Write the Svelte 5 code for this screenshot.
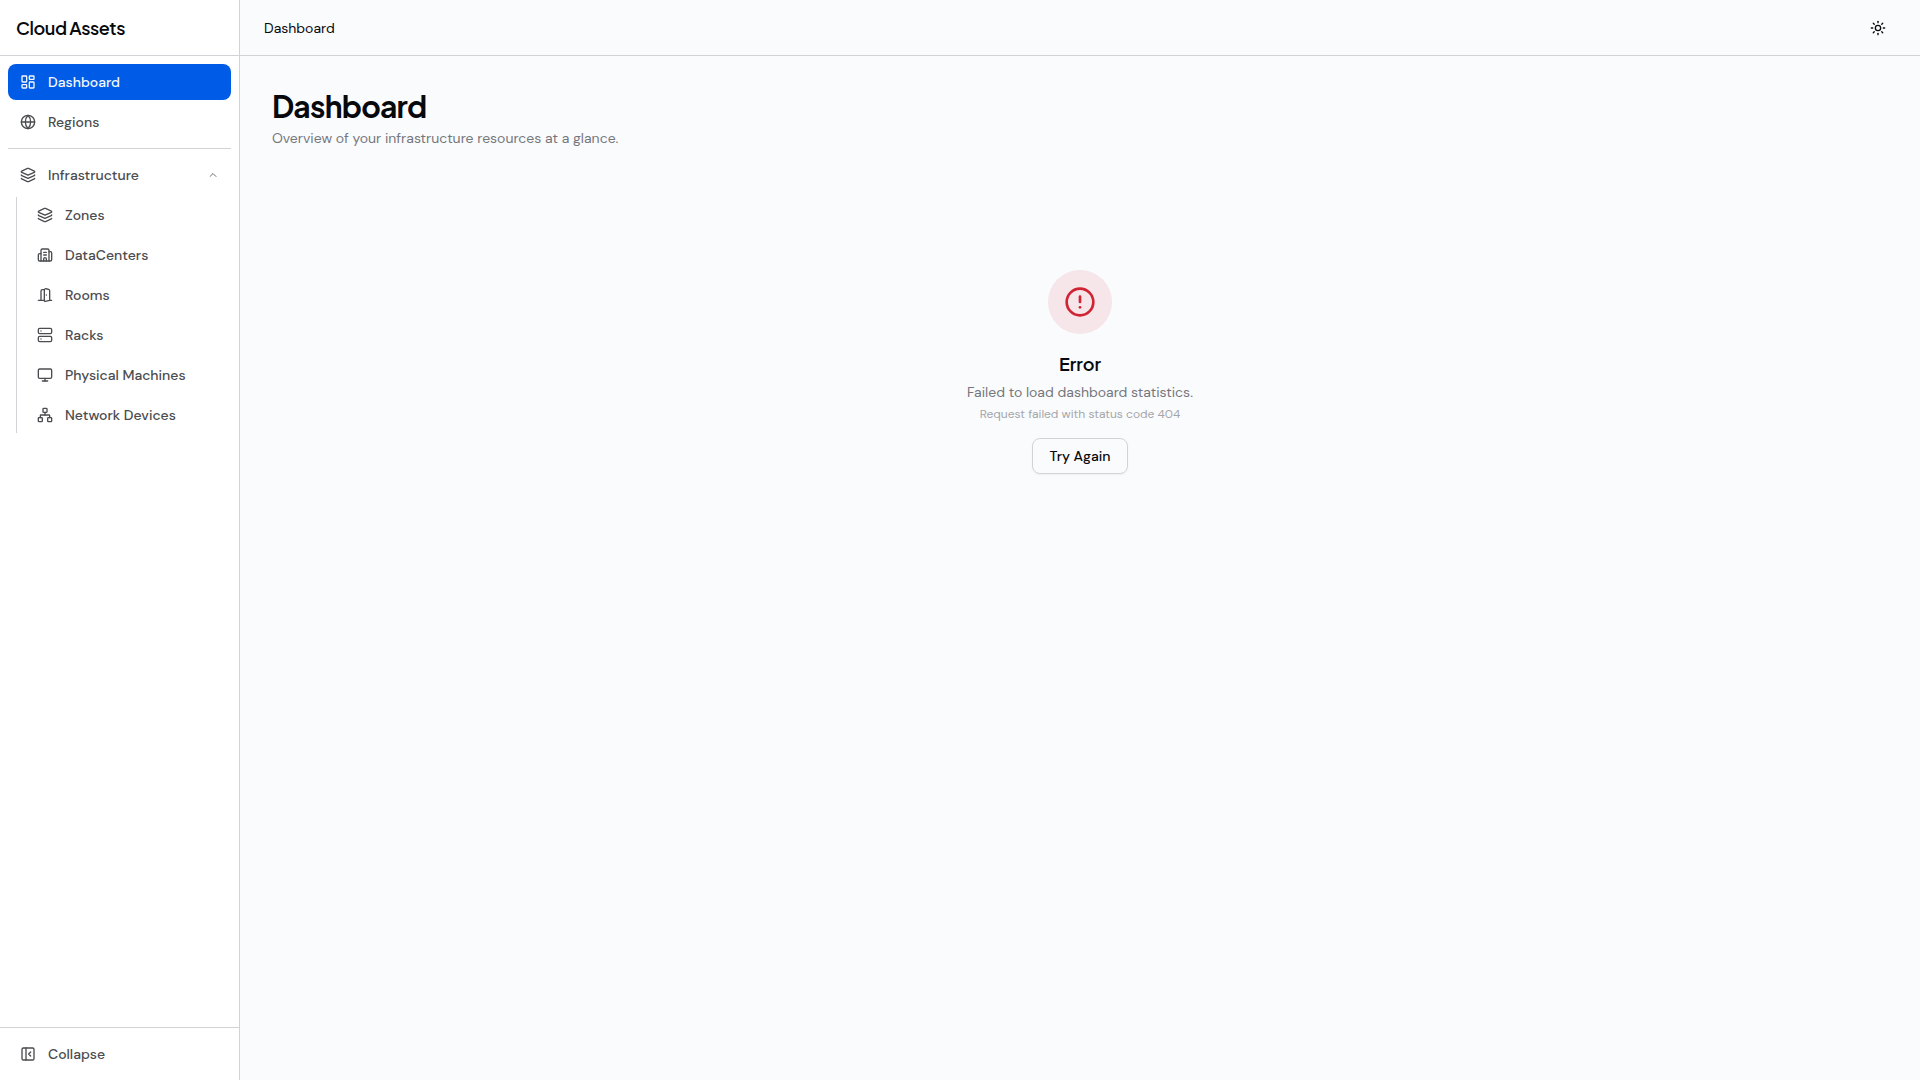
<script>
  let open = $state(true);
  let collapsed = $state(false);

  const topLinks = [
    { label: "Dashboard", icon: "dashboard", active: true },
    { label: "Regions", icon: "globe" }
  ];

  const infraLinks = [
    { label: "Zones", icon: "layers" },
    { label: "DataCenters", icon: "building" },
    { label: "Rooms", icon: "door" },
    { label: "Racks", icon: "server" },
    { label: "Physical Machines", icon: "monitor" },
    { label: "Network Devices", icon: "network" }
  ];

  // stroke paths on a 24x24 grid
  const icons = {
    dashboard: [
      "M4 3h5a1 1 0 0 1 1 1v7a1 1 0 0 1-1 1H4a1 1 0 0 1-1-1V4a1 1 0 0 1 1-1z",
      "M15 3h5a1 1 0 0 1 1 1v3a1 1 0 0 1-1 1h-5a1 1 0 0 1-1-1V4a1 1 0 0 1 1-1z",
      "M15 12h5a1 1 0 0 1 1 1v7a1 1 0 0 1-1 1h-5a1 1 0 0 1-1-1v-7a1 1 0 0 1 1-1z",
      "M4 16h5a1 1 0 0 1 1 1v3a1 1 0 0 1-1 1H4a1 1 0 0 1-1-1v-3a1 1 0 0 1 1-1z"
    ],
    globe: [
      "M2 12a10 10 0 1 0 20 0a10 10 0 1 0-20 0",
      "M12 2a14.5 14.5 0 0 0 0 20 14.5 14.5 0 0 0 0-20",
      "M2 12h20"
    ],
    layers: [
      "M12.83 2.18a2 2 0 0 0-1.66 0L2.6 6.08a1 1 0 0 0 0 1.83l8.58 3.91a2 2 0 0 0 1.66 0l8.58-3.9a1 1 0 0 0 0-1.83z",
      "M2 12a1 1 0 0 0 .58.91l8.6 3.91a2 2 0 0 0 1.65 0l8.58-3.9A1 1 0 0 0 22 12",
      "M2 17a1 1 0 0 0 .58.91l8.6 3.91a2 2 0 0 0 1.65 0l8.58-3.9A1 1 0 0 0 22 17"
    ],
    building: [
      "M10 12h4",
      "M10 8h4",
      "M14 21v-3a2 2 0 0 0-4 0v3",
      "M6 10H4a2 2 0 0 0-2 2v7a2 2 0 0 0 2 2h16a2 2 0 0 0 2-2V9a2 2 0 0 0-2-2h-2",
      "M6 21V5a2 2 0 0 1 2-2h8a2 2 0 0 1 2 2v16"
    ],
    door: [
      "M11 20H2",
      "M11 4.562v16.157a1 1 0 0 0 1.242.97L19 20V5.562a2 2 0 0 0-1.515-1.94l-4-1A2 2 0 0 0 11 4.561z",
      "M11 4H8a2 2 0 0 0-2 2v14",
      "M14 12h.01",
      "M22 20h-3"
    ],
    server: [
      "M4 2h16a2 2 0 0 1 2 2v4a2 2 0 0 1-2 2H4a2 2 0 0 1-2-2V4a2 2 0 0 1 2-2z",
      "M4 14h16a2 2 0 0 1 2 2v4a2 2 0 0 1-2 2H4a2 2 0 0 1-2-2v-4a2 2 0 0 1 2-2z",
      "M6 6h.01",
      "M6 18h.01"
    ],
    monitor: [
      "M4 3h16a2 2 0 0 1 2 2v10a2 2 0 0 1-2 2H4a2 2 0 0 1-2-2V5a2 2 0 0 1 2-2z",
      "M8 21h8",
      "M12 17v4"
    ],
    network: [
      "M17 16h4a1 1 0 0 1 1 1v4a1 1 0 0 1-1 1h-4a1 1 0 0 1-1-1v-4a1 1 0 0 1 1-1z",
      "M3 16h4a1 1 0 0 1 1 1v4a1 1 0 0 1-1 1H3a1 1 0 0 1-1-1v-4a1 1 0 0 1 1-1z",
      "M10 2h4a1 1 0 0 1 1 1v4a1 1 0 0 1-1 1h-4a1 1 0 0 1-1-1V3a1 1 0 0 1 1-1z",
      "M5 16v-3a1 1 0 0 1 1-1h12a1 1 0 0 1 1 1v3",
      "M12 12V8"
    ],
    panel: [
      "M5 3h14a2 2 0 0 1 2 2v14a2 2 0 0 1-2 2H5a2 2 0 0 1-2-2V5a2 2 0 0 1 2-2z",
      "M9 3v18",
      "m16 15-3-3 3-3"
    ],
    sun: [
      "M8 12a4 4 0 1 0 8 0a4 4 0 1 0-8 0",
      "M12 2v2",
      "M12 20v2",
      "m4.93 4.93 1.41 1.41",
      "m17.66 17.66 1.41 1.41",
      "M2 12h2",
      "M20 12h2",
      "m6.34 17.66-1.41 1.41",
      "m19.07 4.93-1.41 1.41"
    ],
    alert: ["M2 12a10 10 0 1 0 20 0a10 10 0 1 0-20 0", "M12 8v4", "M12 16h.01"],
    chevron: ["m18 15-6-6-6 6"]
  };
</script>

{#snippet icon(name, size = 16)}
  <svg
    class="icon"
    width={size}
    height={size}
    viewBox="0 0 24 24"
    aria-hidden="true">
    {#each icons[name] as d}
      <path {d} />
    {/each}
  </svg>
{/snippet}

<div class="layout">
  <aside class="sidebar" class:collapsed>
    <div class="brand">{collapsed ? "" : "Cloud Assets"}</div>

    <nav aria-label="Main">
      {#each topLinks as link}
        <a
          class="item"
          class:active={link.active}
          href="#{link.icon}"
          aria-current={link.active ? "page" : undefined}>
          {@render icon(link.icon)}
          <span class="label">{link.label}</span>
        </a>
      {/each}

      <hr />

      <button class="item" aria-expanded={open} onclick={() => (open = !open)}>
        {@render icon("layers")}
        <span class="label">Infrastructure</span>
        <span class="chevron" class:closed={!open}>{@render icon("chevron", 12)}</span>
      </button>

      {#if open}
        <div class="group">
          {#each infraLinks as link}
            <a class="item" href="#{link.icon}">
              {@render icon(link.icon)}
              <span class="label">{link.label}</span>
            </a>
          {/each}
        </div>
      {/if}
    </nav>

    <div class="bottom">
      <button class="item" onclick={() => (collapsed = !collapsed)}>
        {@render icon("panel")}
        <span class="label">Collapse</span>
      </button>
    </div>
  </aside>

  <div class="page">
    <header>
      <span class="crumb">Dashboard</span>
      <button class="theme" aria-label="Toggle theme">
        {@render icon("sun")}
      </button>
    </header>

    <main>
      <h1>Dashboard</h1>
      <p class="subtitle">Overview of your infrastructure resources at a glance.</p>

      <section class="error" role="alert">
        <div class="badge">{@render icon("alert", 32)}</div>
        <h2>Error</h2>
        <p class="message">Failed to load dashboard statistics.</p>
        <p class="detail">Request failed with status code 404</p>
        <button class="retry">Try Again</button>
      </section>
    </main>
  </div>
</div>

<style>
  :global(body) {
    margin: 0;
  }

  .layout {
    display: flex;
    min-height: 100vh;
    background: #fafbfd;
    color: #07090d;
    font-family: "DM Sans", Inter, "Open Sans", sans-serif;
    font-size: 14px;
    line-height: 20px;
  }

  .icon {
    display: block;
    flex-shrink: 0;
    fill: none;
    stroke: currentColor;
    stroke-width: 2;
    stroke-linecap: round;
    stroke-linejoin: round;
  }

  button {
    font: inherit;
    color: inherit;
    background: none;
    border: 0;
    cursor: pointer;
  }

  .sidebar {
    display: flex;
    flex-direction: column;
    flex-shrink: 0;
    box-sizing: border-box;
    width: 240px;
    background: #fff;
    border-right: 1px solid #d2d3d6;
  }
  .sidebar.collapsed {
    width: 57px;
  }
  .collapsed .label,
  .collapsed .chevron {
    display: none;
  }

  .brand,
  h1,
  h2 {
    font-family: "Plus Jakarta Sans", "DM Sans", Inter, sans-serif;
    font-weight: 600;
  }

  .brand {
    display: flex;
    align-items: center;
    box-sizing: border-box;
    height: 56px;
    padding: 0 16px;
    border-bottom: 1px solid #d2d3d6;
    font-size: 18px;
    letter-spacing: -0.025em;
  }

  nav {
    display: flex;
    flex: 1;
    flex-direction: column;
    gap: 4px;
    padding: 8px;
  }

  .item {
    display: flex;
    align-items: center;
    gap: 12px;
    box-sizing: border-box;
    width: 100%;
    height: 36px;
    padding: 0 12px;
    border-radius: 8px;
    color: #4b4c4f;
    font-weight: 500;
    text-align: left;
    text-decoration: none;
  }
  .item:hover {
    background: #f1f3f7;
  }
  .item.active {
    background: #005be6;
    color: #f5f9ff;
  }
  .label {
    flex: 1;
  }
  .chevron {
    opacity: 0.8;
  }
  .chevron.closed {
    transform: rotate(180deg);
  }

  hr {
    width: 100%;
    margin: 4px 0;
    border: 0;
    border-top: 1px solid #d2d3d6;
  }

  .group {
    display: flex;
    flex-direction: column;
    gap: 4px;
    margin-left: 8px;
    padding-left: 8px;
    border-left: 1px solid #d2d3d6;
  }
  .collapsed .group {
    margin: 0;
    padding: 0;
    border: 0;
  }

  .bottom {
    padding: 8px;
    border-top: 1px solid #d2d3d6;
  }

  .page {
    display: flex;
    flex: 1;
    flex-direction: column;
    min-width: 0;
  }

  header {
    display: flex;
    align-items: center;
    justify-content: space-between;
    box-sizing: border-box;
    height: 56px;
    padding: 0 24px;
    border-bottom: 1px solid #d2d3d6;
  }
  .theme {
    padding: 10px;
    border-radius: 8px;
  }

  main {
    padding: 32px;
  }

  h1,
  h2,
  p {
    margin: 0;
  }
  h1 {
    font-size: 30px;
    font-weight: 700;
    line-height: 36px;
    letter-spacing: -0.025em;
  }
  .subtitle {
    margin-top: 4px;
    color: #75777c;
  }

  .error {
    display: flex;
    flex-direction: column;
    align-items: center;
    padding: 122px 0 96px;
    text-align: center;
  }
  .badge {
    padding: 16px;
    border-radius: 50%;
    background: #f6e5e9;
    color: #d02334;
  }
  h2 {
    margin-top: 16px;
    font-size: 18px;
    line-height: 28px;
  }
  .message {
    margin-top: 4px;
    color: #75777c;
  }
  .detail {
    margin-top: 4px;
    color: #a4a6aa;
    font-size: 12px;
    line-height: 16px;
  }
  .retry {
    height: 36px;
    margin-top: 16px;
    padding: 0 16px;
    border: 1px solid #d2d3d6;
    border-radius: 8px;
    box-shadow: 0 1px 2px rgba(0, 0, 0, 0.05);
    font-weight: 500;
  }
</style>
